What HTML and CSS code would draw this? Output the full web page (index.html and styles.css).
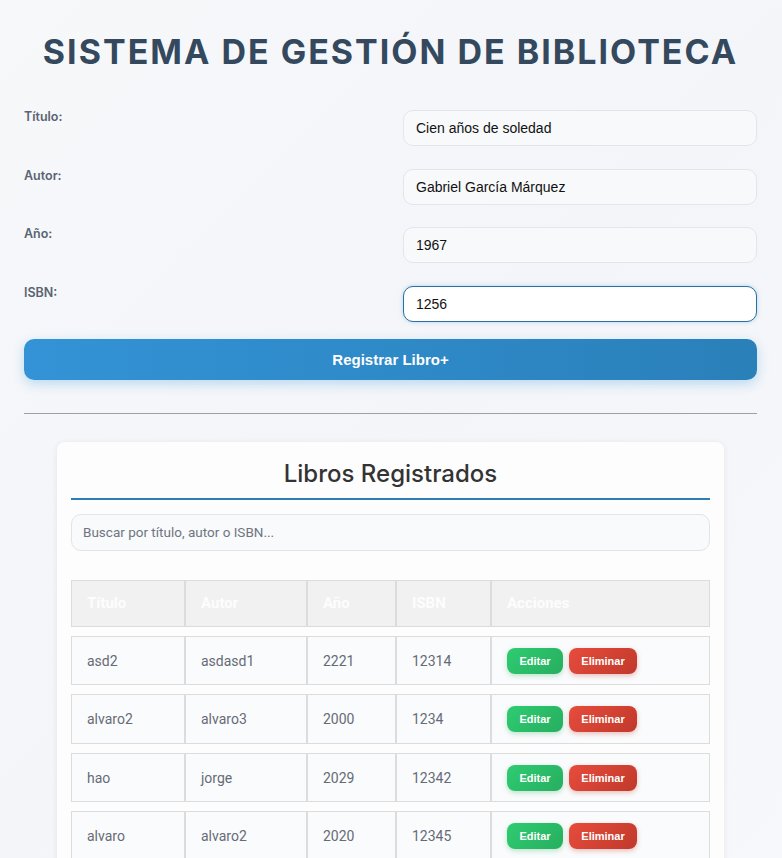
FILE: index.html
```html
<!DOCTYPE html>
<html lang="es">
<head>
<meta charset="utf-8">
<title>Sistema de Gestión de Biblioteca</title>
<link rel="stylesheet" href="styles.css">
</head>
<body>
<div class="page">
  <h1 class="title">SISTEMA DE GESTIÓN DE BIBLIOTECA</h1>
  <form class="book-form">
    <div class="form-row">
      <label class="form-label">Título:</label>
      <input class="form-input" type="text" value="Cien años de soledad">
    </div>
    <div class="form-row">
      <label class="form-label">Autor:</label>
      <input class="form-input" type="text" value="Gabriel García Márquez">
    </div>
    <div class="form-row">
      <label class="form-label">Año:</label>
      <input class="form-input" type="text" value="1967">
    </div>
    <div class="form-row">
      <label class="form-label">ISBN:</label>
      <input class="form-input focused" type="text" value="1256">
    </div>
    <button type="button" class="submit-btn">Registrar Libro+</button>
  </form>
  <hr class="divider">
  <section class="card">
    <h2 class="card-title">Libros Registrados</h2>
    <input class="search" type="text" placeholder="Buscar por título, autor o ISBN...">
    <table class="books">
      <colgroup>
        <col class="c1"><col class="c2"><col class="c3"><col class="c4"><col class="c5">
      </colgroup>
      <thead>
        <tr><th>Título</th><th>Autor</th><th>Año</th><th>ISBN</th><th>Acciones</th></tr>
      </thead>
      <tbody>
        <tr><td>asd2</td><td>asdasd1</td><td>2221</td><td>12314</td><td><span class="btn edit">Editar</span><span class="btn del">Eliminar</span></td></tr>
        <tr><td>alvaro2</td><td>alvaro3</td><td>2000</td><td>1234</td><td><span class="btn edit">Editar</span><span class="btn del">Eliminar</span></td></tr>
        <tr><td>hao</td><td>jorge</td><td>2029</td><td>12342</td><td><span class="btn edit">Editar</span><span class="btn del">Eliminar</span></td></tr>
        <tr><td>alvaro</td><td>alvaro2</td><td>2020</td><td>12345</td><td><span class="btn edit">Editar</span><span class="btn del">Eliminar</span></td></tr>
      </tbody>
    </table>
  </section>
</div>
</body>
</html>
```
FILE: styles.css
```css
html, body {
  margin: 0;
  padding: 0;
}
body {
  background: linear-gradient(135deg, #f7f8fa 0%, #f3f5f9 50%, #f6f8fb 100%);
  font-family: "Liberation Sans", Arial, sans-serif;
  min-height: 858px;
}
.page {
  padding: 0 25px 0 24px;
}
.title {
  margin: 0;
  padding-top: 31px;
  height: 110px;
  box-sizing: border-box;
  text-align: center;
  font-family: Inter, sans-serif;
  font-weight: 700;
  font-size: 34px;
  letter-spacing: 2px;
  color: #34495e;
  line-height: 42px;
}
.book-form {
  display: flex;
  flex-direction: column;
}
.form-row {
  display: grid;
  grid-template-columns: 1fr 1fr;
  column-gap: 25px;
  height: 58.7px;
}
.form-label {
  font-family: Inter, sans-serif;
  font-size: 12.5px;
  font-weight: 600;
  color: #5a6472;
  line-height: 14px;
  margin-top: 0;
}
.form-input {
  height: 36px;
  box-sizing: border-box;
  border: 1px solid #e2e6ec;
  border-radius: 10px;
  background: #f8f9fb;
  padding: 0 12px;
  font-family: "Liberation Sans", Arial, sans-serif;
  font-size: 14px;
  color: #111;
  outline: none;
}
.form-input.focused {
  border-color: #2c6e9e;
  background: #fff;
  box-shadow: 0 0 4px rgba(52, 152, 219, 0.35);
}
.submit-btn {
  margin-top: -6px;
  height: 41px;
  border: none;
  border-radius: 10px;
  background: linear-gradient(90deg, #3393d6 0%, #2a80b9 100%);
  color: #fff;
  font-family: "Liberation Sans", Arial, sans-serif;
  font-weight: 700;
  font-size: 15px;
  box-shadow: 0 4px 12px rgba(52, 152, 219, 0.3);
}
.divider {
  margin: 33px 0 0;
  border: none;
  border-top: 1px solid #a0a0a0;
}
.card {
  margin: 28px 33px 0;
  background: #fdfdfe;
  border-radius: 8px;
  box-shadow: 0 1px 6px rgba(0, 0, 0, 0.08);
  padding: 14px 14px 20px;
}
.card-title {
  margin: 0;
  text-align: center;
  font-family: Inter, sans-serif;
  font-weight: 500;
  font-size: 24px;
  color: #333;
  line-height: 29px;
  padding-top: 3px;
  padding-bottom: 10px;
  border-bottom: 2px solid #2f7db5;
}
.search {
  display: block;
  width: 100%;
  box-sizing: border-box;
  margin-top: 14px;
  height: 37px;
  border: 1px solid #e1e4ea;
  border-radius: 10px;
  background: #f9fafc;
  padding: 0 11px;
  font-family: Roboto, sans-serif;
  font-size: 13.5px;
  outline: none;
}
.search::placeholder {
  color: #6f7580;
}
.books {
  width: 100%;
  border-collapse: separate;
  border-spacing: 0 9px;
  margin-top: 20px;
  font-family: Roboto, sans-serif;
  font-size: 14px;
}
.c1 { width: 114px; }
.c2 { width: 122px; }
.c3 { width: 89px; }
.c4 { width: 95px; }
.books th, .books td {
  border: 1px solid #dcdcdc;
  text-align: left;
  padding: 0 15px;
}
.books th {
  background: #f1f1f1;
  color: #fdfdfd;
  font-weight: 700;
  height: 45px;
  font-size: 15px;
}
.books td {
  height: 47.5px;
  color: #656b76;
  background: #fafbfc;
}
.btn {
  display: inline-block;
  height: 26px;
  line-height: 26px;
  border-radius: 8px;
  color: #fff;
  font-family: "Liberation Sans", Arial, sans-serif;
  font-weight: 700;
  font-size: 11px;
  text-align: center;
  vertical-align: middle;
}
.edit {
  width: 56px;
  background: linear-gradient(135deg, #2ecc71, #27ae60);
  box-shadow: 0 2px 5px rgba(39, 174, 96, 0.3);
  margin-right: 6px;
}
.del {
  width: 68px;
  background: linear-gradient(135deg, #e74c3c, #c0392b);
  box-shadow: 0 2px 5px rgba(192, 57, 43, 0.3);
}
```
